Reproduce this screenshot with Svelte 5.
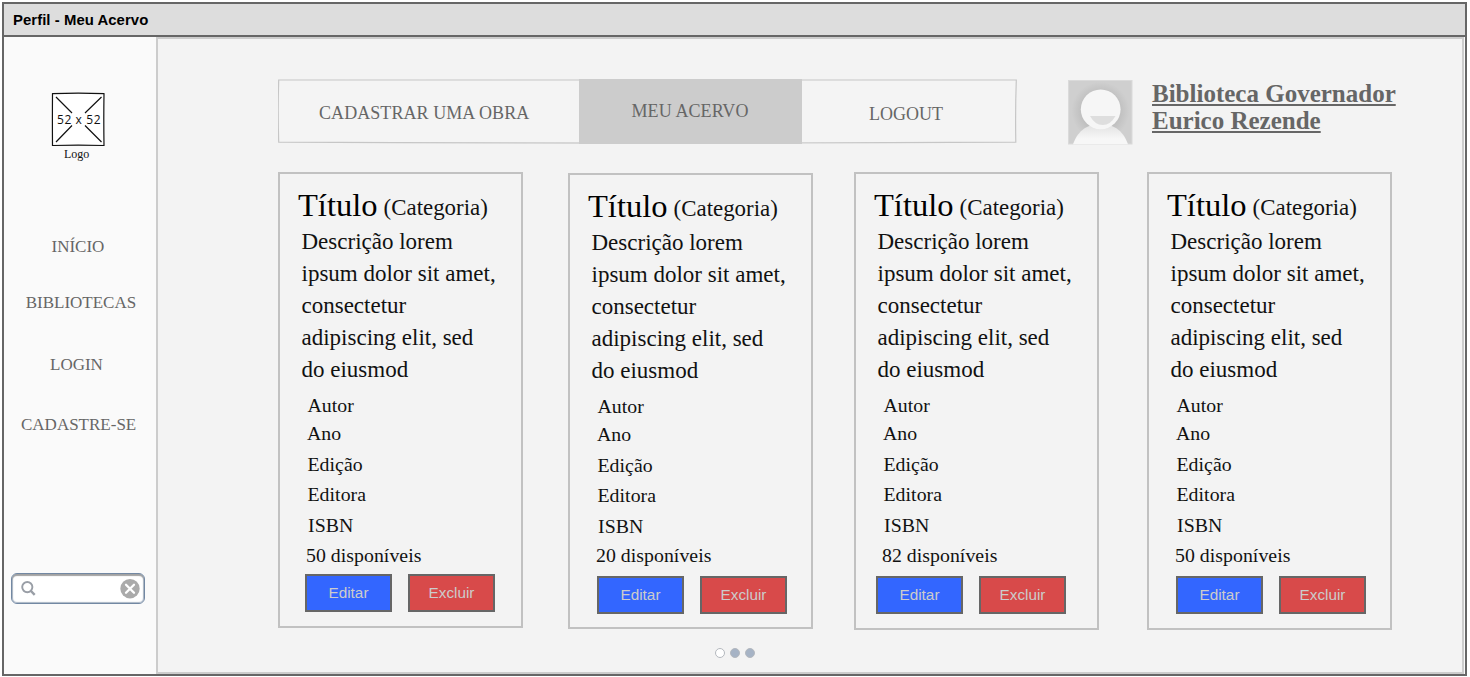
<script>
  const links = ['INÍCIO', 'BIBLIOTECAS', 'LOGIN', 'CADASTRE-SE'];
  const fields = ['Autor', 'Ano', 'Edição', 'Editora', 'ISBN'];
  const works = [{ available: 50 }, { available: 20 }, { available: 82 }, { available: 50 }];
  const description = ['Descrição lorem', 'ipsum dolor sit amet,', 'consectetur', 'adipiscing elit, sed', 'do eiusmod'];
</script>

<div class="window">
  <header class="titlebar">Perfil - Meu Acervo</header>
  <div class="body">
    <aside>
      <svg class="logo" width="54" height="55" viewBox="0 0 54 55">
        <path d="M1.500 1.700Q27 .6 53 1.700Q52.600 27 53 53.500Q27 52.600 1.500 53.500Q1.300 27 1.500 1.700Z" fill="#fff" stroke="#111" stroke-width="1.2" />
        <path d="M5 5 21 21M50.500 5 34 21M5 50 21 33.500M50.500 50 34 33.500" stroke="#111" stroke-width="1.2" />
        <text x="6" y="32" textLength="43.500">52 x 52</text>
      </svg>
      <div class="caption">Logo</div>
      <nav>
        {#each links as link}<a href="#top">{link}</a>{/each}
      </nav>
      <div class="search">
        <svg width="16" height="16" viewBox="0 0 16 16" fill="none" stroke="#999ea6" stroke-width="1.9">
          <circle cx="6.300" cy="6.100" r="5.100" /><path d="m9.500 9.500 4.200 4.400" stroke-width="2.4" />
        </svg>
        <svg width="20" height="20" viewBox="0 0 20 20">
          <circle cx="10" cy="9.700" r="9.700" fill="#aaa" />
          <path d="m6 5.700 8 8M14 5.700l-8 8" stroke="#fff" stroke-width="2.3" stroke-linecap="round" />
        </svg>
      </div>
    </aside>
    <main>
      <div class="top">
        <div class="tabs">
          <svg class="outline" width="740" height="66" viewBox="0 0 740 66" fill="none">
            <path d="M.700 1Q370 .4 738.300 1Q737.200 32 737.800 63.200Q370 65 .700 63.200Q-.3 32 .700 1Z" fill="#f4f4f4" stroke="#c6c6c6" stroke-width="1.2" />
          </svg>
          <span class="tab first">CADASTRAR UMA OBRA</span>
          <span class="tab active">MEU ACERVO</span>
          <span class="tab last">LOGOUT</span>
        </div>
        <svg class="avatar" width="65" height="65" viewBox="0 0 65 65">
          <defs>
            <radialGradient id="shade" cx="32.5" cy="31" r="29" gradientUnits="userSpaceOnUse">
              <stop offset=".6" stop-color="#bdbdbd" /><stop offset="1" stop-color="#cfcfcf" />
            </radialGradient>
            <linearGradient id="coat" x1="0" y1="45" x2="0" y2="59" gradientUnits="userSpaceOnUse">
              <stop stop-color="#e2e2e2" /><stop offset="1" stop-color="#f7f7f7" />
            </linearGradient>
          </defs>
          <rect x=".500" y=".500" width="63.500" height="63.500" fill="url(#shade)" stroke="#dadada" />
          <path d="M5 64.300C9 53 17 44 32.500 44S56 53 60 64.300Z" fill="url(#coat)" />
          <circle cx="32.700" cy="29.300" r="19.900" fill="#f6f6f6" />
          <path d="M22 36h25.500Q42.500 45 34.700 45T22 36Z" fill="#dedede" />
        </svg>
        <h1>Biblioteca Governador<br />Eurico Rezende</h1>
      </div>
      <div class="cards">
        {#each works as work}
          <article>
            <h2>Título <small>(Categoria)</small></h2>
            <p class="description">{#each description as line}{line}<br />{/each}</p>
            <ul>
              {#each fields as field}<li>{field}</li>{/each}
              <li>{work.available} disponíveis</li>
            </ul>
            <div class="actions">
              <button class="edit">Editar</button>
              <button class="remove">Excluir</button>
            </div>
          </article>
        {/each}
      </div>
      <div class="dots"><i class="current"></i><i></i><i></i></div>
    </main>
  </div>
</div>

<style>
  :global(body) { background: #fff; }
  * { box-sizing: border-box; }
  .window {
    width: 1465px; height: 674px; margin: 2px 0 0 2px;
    display: flex; flex-direction: column;
    border: 2px solid #666; background: #fafafa;
    font-family: 'Liberation Serif', serif;
    overflow: hidden;
  }
  .titlebar {
    flex: none; height: 33px; padding: 1px 0 0 9px;
    border-bottom: 2px solid #666; background: #ddd; color: #000;
    font: bold 14.9px/30px 'Liberation Sans', sans-serif;
    letter-spacing: .05px;
  }
  .body { flex: 1; display: flex; min-height: 0; }
  aside { flex: none; width: 152px; padding-top: 55px; display: flex; flex-direction: column; }
  .logo { margin-left: 47px; flex: none; }
  .logo text { font: 12px 'Open Sans', sans-serif; fill: #111; }
  .caption { margin-left: 60px; font-size: 12px; line-height: 14px; height: 14px; color: #111; }
  nav { display: flex; flex-direction: column; align-items: flex-start; margin-top: 76px; }
  nav a { color: #666; font-size: 17px; line-height: 20px; text-decoration: none; margin-left: 47.500px; }
  nav a:nth-child(2) { margin: 36px 0 0 21.700px; }
  nav a:nth-child(3) { margin: 42px 0 0 46px; }
  nav a:nth-child(4) { margin: 40px 0 0 17px; }
  .search {
    width: 134px; height: 31px; margin: 138px 0 0 7px; padding: 0 4px 0 9px;
    display: flex; align-items: center; justify-content: space-between;
    border: 1px solid #7288a3; border-radius: 6px; background: #fff;
    box-shadow: inset 0 2px 1px #a2a2a2, inset 0 0 1px 1px #a9b5c4;
  }
  main {
    flex: 1; min-width: 0; padding: 40px 0 0 120px;
    border: 2px solid #ccc; background: #f3f3f3; margin-right: 1px;
  }
  .top { display: flex; height: 66px; }
  .tabs { position: relative; display: flex; width: 740px; height: 66px; flex: none; }
  .outline { position: absolute; left: 0; top: 0; }
  .tab { position: relative; color: #666; font-size: 18px; line-height: 66px; height: 66px; }
  .first { width: 301px; padding: 1px 0 0 41px; letter-spacing: .07px; }
  .active { width: 223px; height: 65px; padding-left: 52.500px; background: #ccc; line-height: 65px; letter-spacing: .1px; }
  .last { padding: 2px 0 0 67px; }
  .avatar { margin: 1px 0 0 50px; flex: none; }
  h1 { margin: 1px 0 0 19px; font-size: 25px; line-height: 27px; color: #666; text-decoration: underline; }
  .cards { display: grid; grid-template-columns: 290px 286px 293px 245px; margin-top: 27px; height: 458px; align-items: start; }
  article { width: 245px; height: 456px; border: 2px solid #c1c1c1; padding: 13px 0 0 18px; white-space: nowrap; color: #111; }
  article:nth-child(2) { margin-top: 1px; }
  article:nth-child(n + 3) { height: 458px; }
  h2 { margin: 0; font-weight: normal; font-size: 32.5px; line-height: 36px; height: 36px; color: #000; }
  small { position: relative; top: -1px; font-size: 22.9px; margin-left: -2px; color: #111; }
  .description { margin: 3px 0 0 3.500px; font-size: 23px; line-height: 32px; }
  ul { list-style: none; margin: 5px 0 0 9.500px; padding: 0; font-size: 19.8px; line-height: 28px; letter-spacing: .04px; }
  li { height: 28px; }
  li:nth-child(n + 3) { margin-top: 2.500px; }
  li:nth-child(2) { margin-left: -.500px; }
  li:nth-child(5) { margin-left: .500px; }
  li:nth-child(6) { margin-left: -1.500px; }
  .actions { display: flex; gap: 16px; margin: 5px 0 0 7px; }
  button {
    width: 87px; height: 38px; padding: 0; border: 2px solid #666; color: #ccc;
    font: 15.3px/32px 'Liberation Sans', sans-serif;
  }
  article:nth-child(2) li:nth-child(6) { line-height: 26px; }
  article:nth-child(2) .actions { margin: 6px 0 0 9px; }
  article:nth-child(3) .actions { margin: 7px 0 0 2px; }
  article:nth-child(4) .actions { margin: 7px 0 0 9px; }
  .edit { background: #36f; }
  .remove { background: #d84a4a; }
  .dots { display: flex; gap: 5px; margin: 18px 0 0 436.500px; }
  .dots i { width: 10px; height: 10px; border-radius: 50%; background: #a6b3c5; border: 1px solid #b4b8be; }
  .dots .current { background: #fff; }
</style>
